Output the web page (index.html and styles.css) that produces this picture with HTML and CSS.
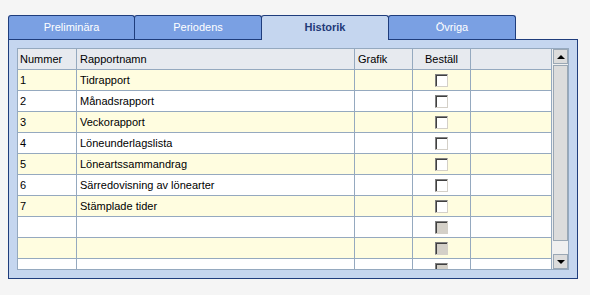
FILE: index.html
```html
<!DOCTYPE html>
<html>
<head>
<meta charset="utf-8">
<link rel="stylesheet" href="styles.css">
</head>
<body>
<div class="tabview">
  <div class="tabs">
    <div class="tab first">Preliminära</div>
    <div class="tab">Periodens</div>
    <div class="tab active">Historik</div>
    <div class="tab">Övriga</div>
  </div>
  <div class="panel">
    <div class="grid">
      <div class="grid-body">
        <table>
          <colgroup>
            <col class="c-num"><col class="c-name"><col class="c-graf"><col class="c-best"><col class="c-rest">
          </colgroup>
          <thead>
            <tr><th>Nummer</th><th>Rapportnamn</th><th>Grafik</th><th class="center">Beställ</th><th></th></tr>
          </thead>
          <tbody>
            <tr class="odd"><td>1</td><td>Tidrapport</td><td></td><td class="center"><span class="cb"></span></td><td></td></tr>
            <tr><td>2</td><td>Månadsrapport</td><td></td><td class="center"><span class="cb"></span></td><td></td></tr>
            <tr class="odd"><td>3</td><td>Veckorapport</td><td></td><td class="center"><span class="cb"></span></td><td></td></tr>
            <tr><td>4</td><td>Löneunderlagslista</td><td></td><td class="center"><span class="cb"></span></td><td></td></tr>
            <tr class="odd"><td>5</td><td>Löneartssammandrag</td><td></td><td class="center"><span class="cb"></span></td><td></td></tr>
            <tr><td>6</td><td>Särredovisning av lönearter</td><td></td><td class="center"><span class="cb"></span></td><td></td></tr>
            <tr class="odd"><td>7</td><td>Stämplade tider</td><td></td><td class="center"><span class="cb"></span></td><td></td></tr>
            <tr><td></td><td></td><td></td><td class="center"><span class="cb dis"></span></td><td></td></tr>
            <tr class="odd"><td></td><td></td><td></td><td class="center"><span class="cb dis"></span></td><td></td></tr>
            <tr><td></td><td></td><td></td><td class="center"><span class="cb dis"></span></td><td></td></tr>
          </tbody>
        </table>
      </div>
      <div class="scrollbar">
        <div class="sb-btn"><span class="arrow up"></span></div>
        <div class="sb-thumb"></div>
        <div class="sb-track"></div>
        <div class="sb-btn"><span class="arrow down"></span></div>
      </div>
    </div>
  </div>
</div>
</body>
</html>
```
FILE: styles.css
```css
html, body {
  margin: 0;
  padding: 0;
  background: #f5f5f5;
}
body {
  padding: 15px 8px 0 8px;
  font-family: "Liberation Sans", Arial, sans-serif;
  font-size: 11px;
  color: #000;
}
.tabview {
  width: 570px;
}
.tabs {
  display: flex;
  height: 24px;
  position: relative;
  z-index: 2;
}
.tab {
  width: 128px;
  height: 24px;
  box-sizing: border-box;
  margin-left: -1px;
  border: 1px solid #1f3d7c;
  border-bottom: none;
  border-radius: 3px 3px 0 0;
  background: #7aa0e3;
  color: #fff;
  text-align: center;
  line-height: 23px;
}
.tab.first {
  margin-left: 0;
  width: 127px;
}
.tab.active {
  background: #c5d6ef;
  color: #1f3a78;
  font-weight: bold;
  height: 25px;
  position: relative;
  z-index: 3;
}
.panel {
  border: 1px solid #1f3d7c;
  background: #c5d6ef;
  padding: 8px;
  position: relative;
  z-index: 1;
}
.grid {
  display: flex;
  border: 1px solid #95a9bf;
  height: 220px;
  background: #fff;
  overflow: hidden;
}
.grid-body {
  width: 534px;
  overflow: hidden;
}
table {
  border-collapse: separate;
  border-spacing: 0;
  table-layout: fixed;
  width: 534px;
}
col.c-num { width: 59px; }
col.c-name { width: 278px; }
col.c-graf { width: 58px; }
col.c-best { width: 58px; }
col.c-rest { width: 81px; }
th, td {
  border-right: 1px solid #95a9bf;
  border-bottom: 1px solid #95a9bf;
  height: 20px;
  line-height: 20px;
  padding: 0 0 0 3px;
  text-align: left;
  font-weight: normal;
  white-space: nowrap;
  overflow: hidden;
  box-sizing: content-box;
}
th:first-child, td:first-child {
  padding-left: 2px;
}
th {
  background: #e7eaef;
}
td.center, th.center {
  text-align: center;
  padding-left: 0;
}
tbody tr {
  background: #fff;
}
tbody tr.odd {
  background: #fffde0;
}
.cb {
  display: inline-block;
  width: 11px;
  height: 11px;
  vertical-align: middle;
  margin-top: -2px;
  border: 1px solid;
  border-color: #808080 #d4d0c8 #d4d0c8 #808080;
  box-shadow: inset 1px 1px 0 #404040;
  background: #fff;
}
.cb.dis {
  background: #d4d0c8;
}
.scrollbar {
  width: 16px;
  display: flex;
  flex-direction: column;
  background: #f0f0f0;
}
.sb-btn {
  width: 15px;
  height: 15px;
  box-sizing: border-box;
  border: 1px solid #9aa7b4;
  background: #dcdcdc;
  margin-left: 1px;
  display: flex;
  align-items: center;
  justify-content: center;
}
.sb-thumb {
  width: 15px;
  height: 176px;
  box-sizing: border-box;
  margin: 1px 0 0 1px;
  border: 1px solid #9aa7b4;
  background: #dcdcdc;
}
.sb-track {
  flex: 1;
}
.arrow {
  width: 0;
  height: 0;
  border-left: 4px solid transparent;
  border-right: 4px solid transparent;
}
.arrow.up {
  border-bottom: 4px solid #000;
}
.arrow.down {
  border-top: 4px solid #000;
}
```
